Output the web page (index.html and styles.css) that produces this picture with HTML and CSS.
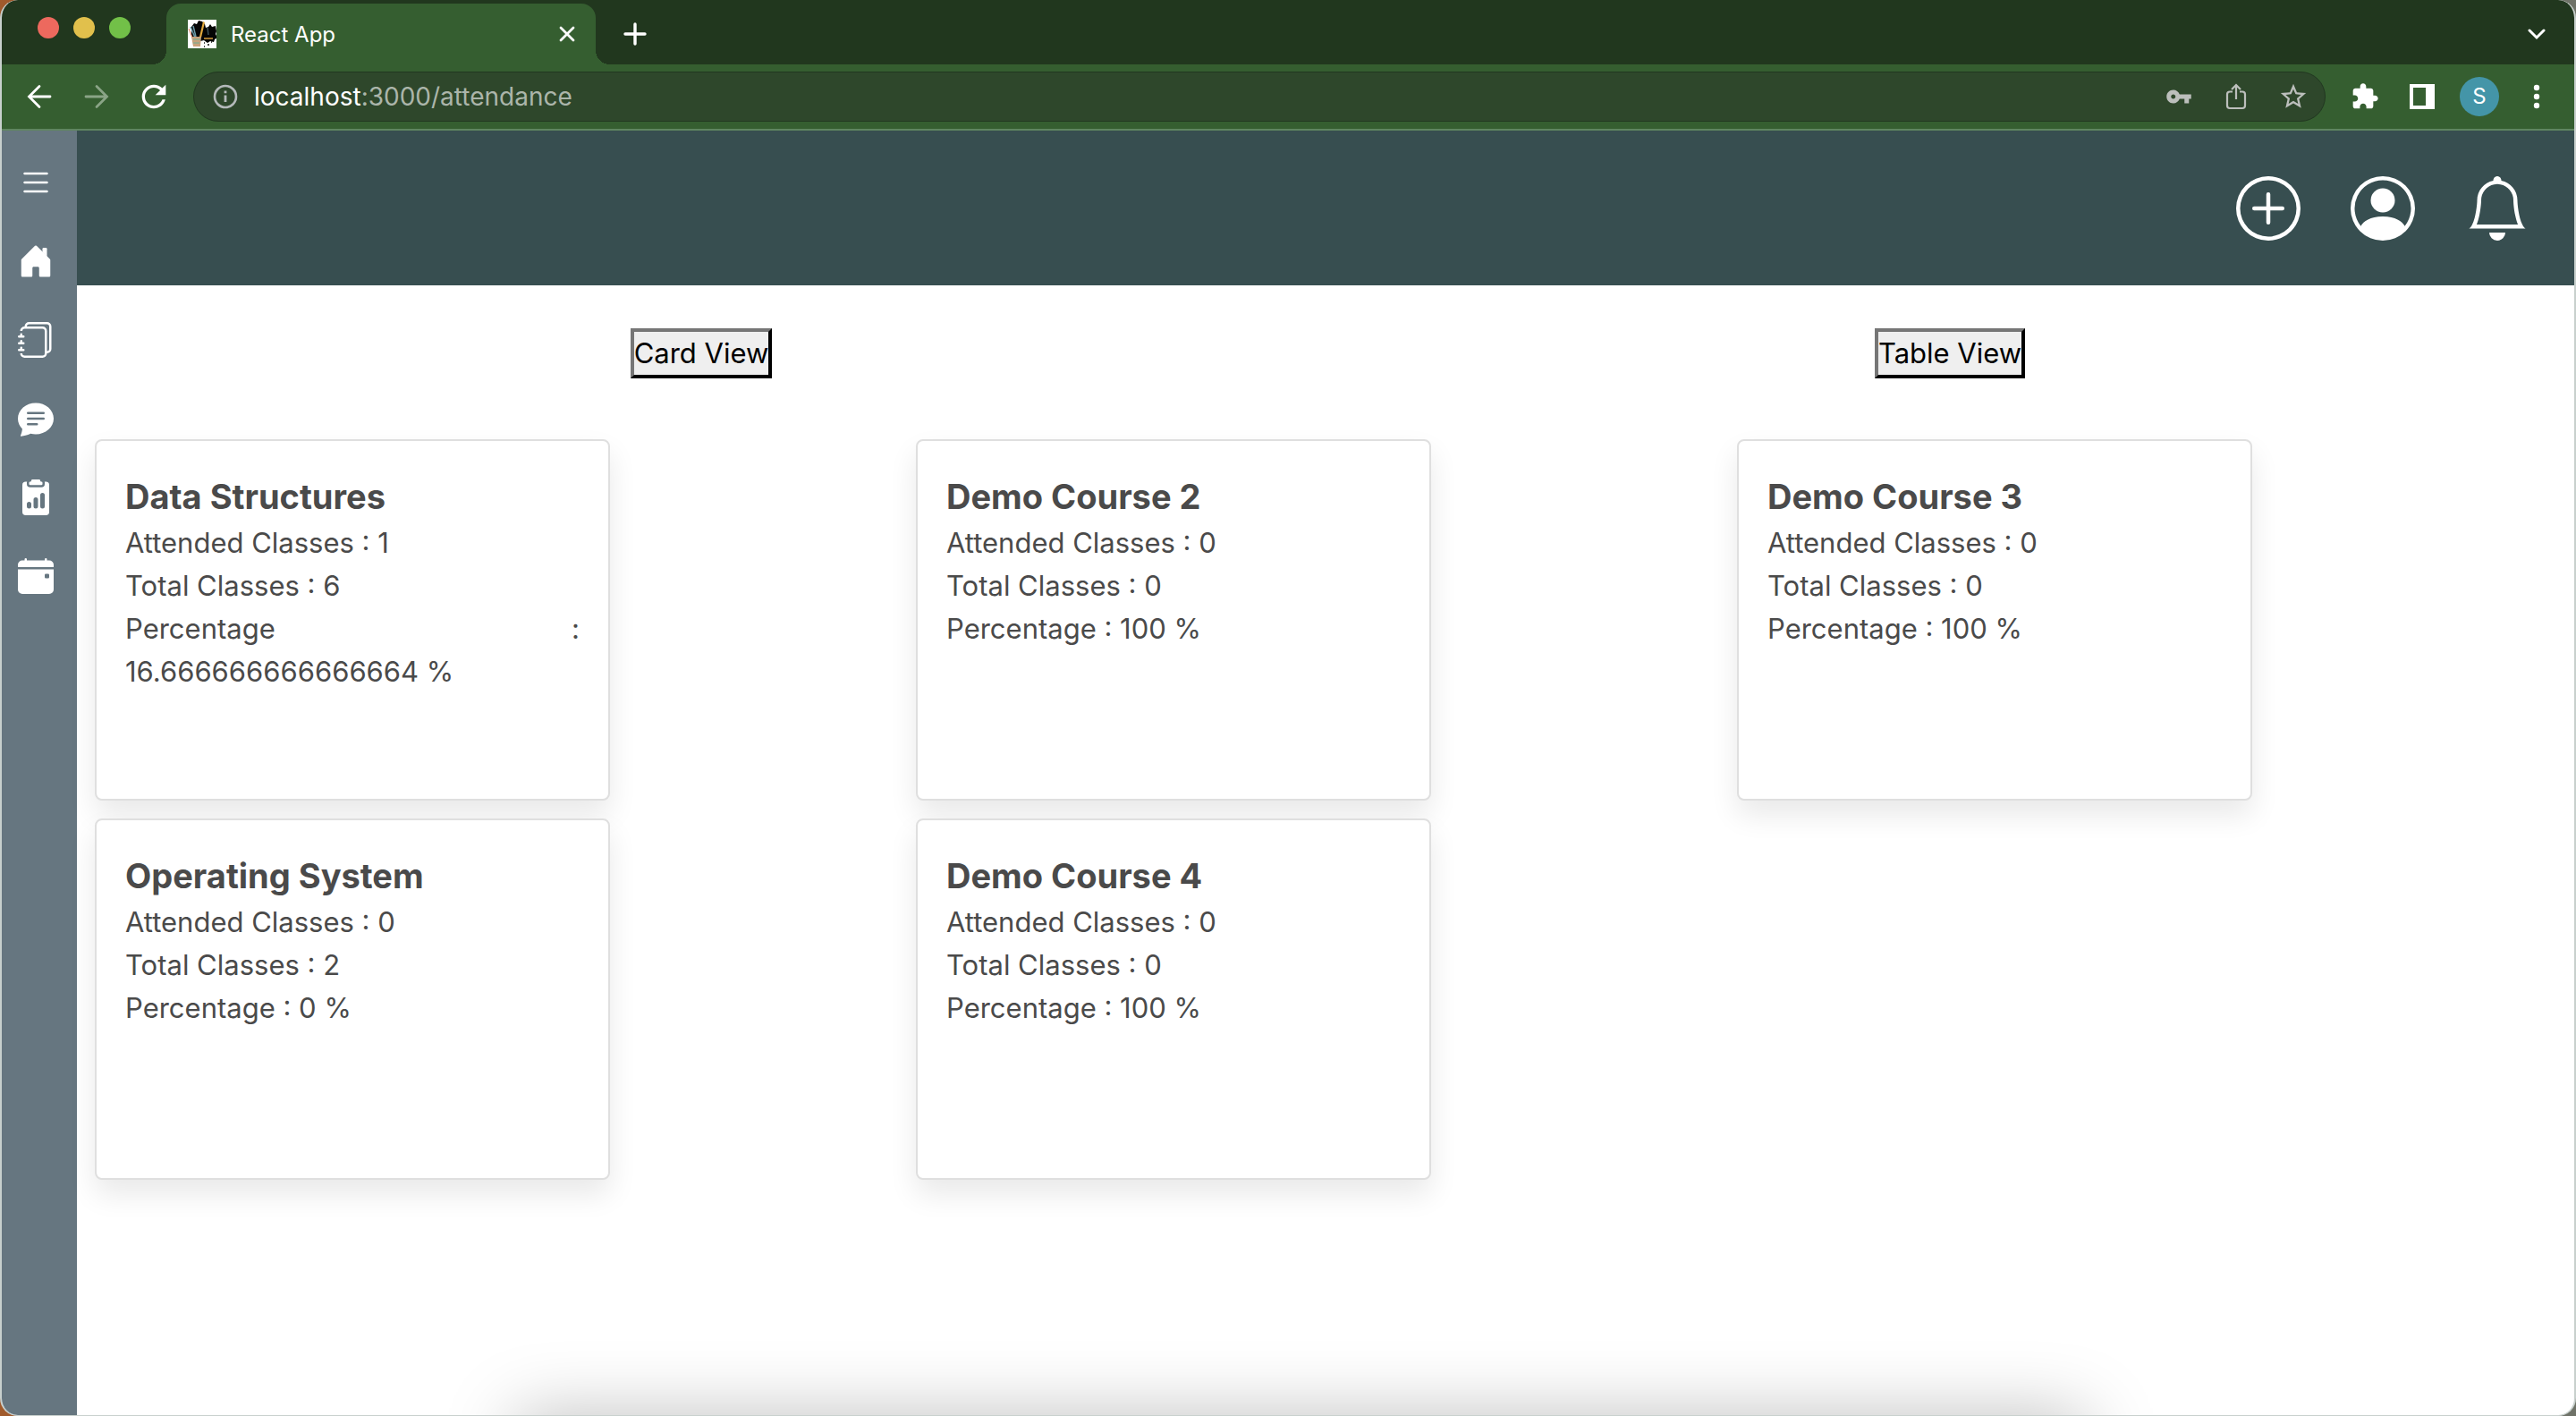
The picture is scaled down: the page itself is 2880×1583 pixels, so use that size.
FILE: index.html
```html
<!DOCTYPE html>
<html lang="en">
<head>
<meta charset="utf-8">
<title>React App</title>
<link rel="stylesheet" href="styles.css">
</head>
<body>
<div class="window">
  <div class="tabstrip">
    <div class="lights">
      <button class="light light-close" aria-label="Close window"></button>
      <button class="light light-min" aria-label="Minimise window"></button>
      <button class="light light-max" aria-label="Zoom window"></button>
    </div>
    <div class="tab">
      <svg class="favicon" viewBox="0 0 32 32" aria-hidden="true">
        <rect width="32" height="32" fill="#fff"/>
        <path d="M4 8l3-4 3 1 2-4 4 1 3 3 1 4 3-1 2-3 2 3 4-1 1 6-1 3 2 4-3 2-1 3-4-1-3 2-4-3-4 1-5-2-4-1-1-5z" fill="#050505"/>
        <path d="M13 19l4-17 2 1-4 17z" fill="#e3a93c"/>
        <path d="M3 8l5 12M6 7l3 12" stroke="#6a9aa8" stroke-width="1.5"/>
        <path d="M1 10l4 10" stroke="#e07a5a" stroke-width="1"/>
        <path d="M4 19h11l-1 11H6z" fill="#c9a27c"/>
        <path d="M6 22h8M6 26h7" stroke="#8cab8c" stroke-width="1.5"/>
        <path d="M18 21h10" stroke="#d69b3a" stroke-width="1.5"/>
        <path d="M22 9l1 8" stroke="#3d5058" stroke-width="1.5"/>
        <path d="M18 26h1M22 28h2M18 30h1M26 25h1" stroke="#111" stroke-width="1.5"/>
      </svg>
      <span class="tab-title">React App</span>
      <button class="tab-close" aria-label="Close tab"><svg width="20" height="20" viewBox="0 0 20 20"><path d="M3 3l14 14M17 3L3 17" stroke="#fff" stroke-width="2.8" stroke-linecap="round"/></svg></button>
    </div>
    <button class="tool" aria-label="New tab"><svg width="26" height="26" viewBox="0 0 26 26"><path d="M13 2v22M2 13h22" stroke="#fff" stroke-width="3.4" stroke-linecap="round"/></svg></button>
    <button class="tool tab-search" aria-label="Search tabs"><svg width="20" height="14" viewBox="0 0 20 14"><path d="M2 3l8 8 8-8" fill="none" stroke="#fff" stroke-width="3" stroke-linecap="round"/></svg></button>
  </div>
  <div class="toolbar">
    <button class="tool" aria-label="Back"><svg width="28" height="28" viewBox="0 0 28 28"><path d="M26 14H3M14 2.500L2.500 14 14 25.500" fill="none" stroke="#fff" stroke-width="2.800" stroke-linecap="round"/></svg></button>
    <button class="tool" aria-label="Forward"><svg width="28" height="28" viewBox="0 0 28 28"><path d="M2 14h23M14 2.500L25.500 14 14 25.500" fill="none" stroke="#8aa486" stroke-width="2.800" stroke-linecap="round"/></svg></button>
    <button class="tool" aria-label="Reload"><svg width="40" height="40" viewBox="0 0 24 24"><path fill="#fff" d="M17.650 6.350C16.200 4.900 14.210 4 12 4c-4.420 0-7.990 3.580-7.990 8s3.570 8 7.990 8c3.730 0 6.840-2.550 7.730-6h-2.080c-.820 2.330-3.040 4-5.650 4-3.310 0-6-2.690-6-6s2.690-6 6-6c1.660 0 3.140.690 4.220 1.780L13 11h7V4l-2.350 2.350z"/></svg></button>
    <div class="omnibox">
      <svg class="info" width="32" height="32" viewBox="0 0 32 32" aria-hidden="true"><circle cx="16" cy="16" r="12" fill="none" stroke="#b4b9ba" stroke-width="2.600"/><path d="M16 14.500v7.500M16 9.500v2.800" stroke="#b4b9ba" stroke-width="2.800"/></svg>
      <div class="url" role="textbox" aria-label="Address" contenteditable="true" spellcheck="false"><span class="host">localhost</span>:3000/attendance</div>
      <button class="tool" aria-label="Passwords"><svg width="30" height="30" viewBox="0 0 24 24"><path fill="#bcbfbc" d="M12.650 10C11.830 7.670 9.610 6 7 6c-3.310 0-6 2.690-6 6s2.690 6 6 6c2.610 0 4.830-1.670 5.650-4H17v4h4v-4h2v-4H12.650zM7 14c-1.100 0-2-.900-2-2s.900-2 2-2 2 .900 2 2-.900 2-2 2z"/></svg></button>
      <button class="tool" aria-label="Share"><svg width="24" height="30" viewBox="0 0 24 30"><path d="M8 9.500H5a3 3 0 0 0-3 3V25a3 3 0 0 0 3 3h14a3 3 0 0 0 3-3V12.500a3 3 0 0 0-3-3h-3M12 18V2.500M7 7l5-5 5 5" fill="none" stroke="#bcbfbc" stroke-width="2.200"/></svg></button>
      <button class="tool" aria-label="Bookmark"><svg width="34" height="34" viewBox="0 0 24 24"><path fill="#bcbfbc" d="M22 9.240l-7.190-.620L12 2 9.190 8.630 2 9.240l5.460 4.730L5.820 21 12 17.270 18.180 21l-1.630-7.030L22 9.240zM12 15.400l-3.760 2.270 1-4.280-3.320-2.880 4.380-.380L12 6.100l1.710 4.040 4.380.380-3.320 2.880 1 4.280L12 15.400z"/></svg></button>
    </div>
    <button class="tool" aria-label="Extensions"><svg width="32" height="32" viewBox="0 0 24 24"><path fill="#fff" d="M20.500 11H19V7c0-1.100-.900-2-2-2h-4V3.500C13 2.120 11.880 1 10.500 1S8 2.120 8 3.500V5H4c-1.100 0-1.990.900-1.990 2v3.800H3.500c1.490 0 2.700 1.210 2.700 2.700s-1.210 2.700-2.700 2.700H2V20c0 1.100.900 2 2 2h3.800v-1.500c0-1.490 1.210-2.700 2.700-2.700 1.490 0 2.700 1.210 2.700 2.700V22H17c1.100 0 2-.900 2-2v-4h1.500c1.380 0 2.500-1.120 2.500-2.500S21.880 11 20.500 11z"/></svg></button>
    <button class="tool" aria-label="Side panel"><svg width="28" height="28" viewBox="0 0 28 28"><path fill="#fff" fill-rule="evenodd" d="M0 0h28v28H0zM4 4v20h14V4z"/></svg></button>
    <button class="tool" aria-label="Profile"><span class="avatar">S</span></button>
    <button class="tool" aria-label="Menu"><svg width="8" height="28" viewBox="0 0 8 28"><g fill="#fff"><circle cx="4" cy="4" r="3.200"/><circle cx="4" cy="14" r="3.200"/><circle cx="4" cy="24" r="3.200"/></g></svg></button>
  </div>
  <div class="app">
    <nav class="sidebar">
      <button class="side-link" aria-label="Toggle menu"><svg viewBox="0 0 16 16"><path d="M2.500 12a.5.5 0 0 1 .5-.5h10a.5.5 0 0 1 0 1H3a.5.5 0 0 1-.5-.5zm0-4a.5.5 0 0 1 .5-.5h10a.5.5 0 0 1 0 1H3a.5.5 0 0 1-.5-.5zm0-4a.5.5 0 0 1 .5-.5h10a.5.5 0 0 1 0 1H3a.5.5 0 0 1-.5-.5z"/></svg></button>
      <a class="side-link" href="#home" aria-label="Home"><svg viewBox="0 0 16 16"><path d="M6.500 10.995V14.500a.5.5 0 0 1-.5.5H2a.5.5 0 0 1-.5-.5v-7a.5.5 0 0 1 .146-.354l6-6a.5.5 0 0 1 .708 0l6 6a.5.5 0 0 1 .146.354v7a.5.5 0 0 1-.5.5h-4a.5.5 0 0 1-.5-.5V11c0-.25-.25-.5-.5-.5H7c-.25 0-.5.25-.5.495z"/><path d="M13 2.500V6l-2-2V2.500a.5.5 0 0 1 .5-.5h1a.5.5 0 0 1 .5.5z"/></svg></a>
      <a class="side-link" href="#courses" aria-label="Courses"><svg viewBox="0 0 16 16"><path d="M5 0h8a2 2 0 0 1 2 2v10a2 2 0 0 1-2 2 2 2 0 0 1-2 2H3a2 2 0 0 1-2-2h1a1 1 0 0 0 1 1h8a1 1 0 0 0 1-1V4a1 1 0 0 0-1-1H3a1 1 0 0 0-1 1H1a2 2 0 0 1 2-2h8a2 2 0 0 1 2 2v9a1 1 0 0 0 1-1V2a1 1 0 0 0-1-1H5a1 1 0 0 0-1 1H3a2 2 0 0 1 2-2z"/><path d="M1 6v-.5a.5.5 0 0 1 1 0V6h.5a.5.5 0 0 1 0 1h-2a.5.5 0 0 1 0-1H1zm0 3v-.5a.5.5 0 0 1 1 0V9h.5a.5.5 0 0 1 0 1h-2a.5.5 0 0 1 0-1H1zm0 2.500v.5H.5a.5.5 0 0 0 0 1h2a.5.5 0 0 0 0-1H2v-.5a.5.5 0 0 0-1 0z"/></svg></a>
      <a class="side-link" href="#messages" aria-label="Messages"><svg viewBox="0 0 16 16"><path d="M16 8c0 3.866-3.582 7-8 7a9.060 9.060 0 0 1-2.347-.306c-.584.296-1.925.864-4.181 1.234-.2.032-.352-.176-.273-.362.354-.836.674-1.950.770-2.966C.744 11.370 0 9.760 0 8c0-3.866 3.582-7 8-7s8 3.134 8 7zM4.500 5a.5.5 0 0 0 0 1h7a.5.5 0 0 0 0-1h-7zm0 2.500a.5.5 0 0 0 0 1h7a.5.5 0 0 0 0-1h-7zm0 2.500a.5.5 0 0 0 0 1h4a.5.5 0 0 0 0-1h-4z"/></svg></a>
      <a class="side-link" href="#attendance" aria-label="Attendance"><svg viewBox="0 0 16 16"><path d="M10 .5a.5.5 0 0 0-.5-.5h-3a.5.5 0 0 0-.5.5.5.5 0 0 1-.5.5.5.5 0 0 0-.5.5V2a.5.5 0 0 0 .5.5h5A.5.5 0 0 0 11 2v-.5a.5.5 0 0 0-.5-.5.5.5 0 0 1-.5-.5Z"/><path d="M4.085 1H3.500A1.500 1.500 0 0 0 2 2.500v12A1.500 1.500 0 0 0 3.500 16h9a1.500 1.500 0 0 0 1.500-1.500v-12A1.500 1.500 0 0 0 12.500 1h-.585c.055.156.085.325.085.5V2a1.500 1.500 0 0 1-1.500 1.500h-5A1.500 1.500 0 0 1 4 2v-.5c0-.175.030-.344.085-.5ZM10 7a1 1 0 1 1 2 0v5a1 1 0 1 1-2 0V7Zm-6 4a1 1 0 1 1 2 0v1a1 1 0 1 1-2 0v-1Zm4-3a1 1 0 0 1 1 1v3a1 1 0 1 1-2 0V9a1 1 0 0 1 1-1Z"/></svg></a>
      <a class="side-link" href="#calendar" aria-label="Calendar"><svg viewBox="0 0 16 16"><path d="M4 .5a.5.5 0 0 0-1 0V1H2a2 2 0 0 0-2 2v1h16V3a2 2 0 0 0-2-2h-1V.5a.5.5 0 0 0-1 0V1H4V.5zM16 14V5H0v9a2 2 0 0 0 2 2h12a2 2 0 0 0 2-2zm-3.500-7h1a.5.5 0 0 1 .5.5v1a.5.5 0 0 1-.5.5h-1a.5.5 0 0 1-.5-.5v-1a.5.5 0 0 1 .5-.5z"/></svg></a>
    </nav>
    <div class="content">
      <header class="header">
        <button class="head-button" aria-label="Add"><svg viewBox="0 0 16 16"><path d="M8 15A7 7 0 1 1 8 1a7 7 0 0 1 0 14zm0 1A8 8 0 1 0 8 0a8 8 0 0 0 0 16z"/><path d="M8 4a.5.5 0 0 1 .5.5v3h3a.5.5 0 0 1 0 1h-3v3a.5.5 0 0 1-1 0v-3h-3a.5.5 0 0 1 0-1h3v-3A.5.5 0 0 1 8 4z"/></svg></button>
        <button class="head-button" aria-label="Account"><svg viewBox="0 0 16 16"><path d="M11 6a3 3 0 1 1-6 0 3 3 0 0 1 6 0z"/><path fill-rule="evenodd" d="M0 8a8 8 0 1 1 16 0A8 8 0 0 1 0 8zm8-7a7 7 0 0 0-5.468 11.370C3.242 11.226 4.805 10 8 10s4.757 1.225 5.468 2.370A7 7 0 0 0 8 1z"/></svg></button>
        <button class="head-button" aria-label="Notifications"><svg viewBox="0 0 16 16"><path d="M8 16a2 2 0 0 0 2-2H6a2 2 0 0 0 2 2zM8 1.918l-.797.161A4.002 4.002 0 0 0 4 6c0 .628-.134 2.197-.459 3.742-.160.767-.376 1.566-.663 2.258h10.244c-.287-.692-.502-1.490-.663-2.258C12.134 8.197 12 6.628 12 6a4.002 4.002 0 0 0-3.203-3.920L8 1.917zM14.220 12c.223.447.481.801.780 1H1c.299-.199.557-.553.780-1C2.680 10.200 3 6.880 3 6c0-2.420 1.720-4.440 4.005-4.901a1 1 0 1 1 1.990 0A5.002 5.002 0 0 1 13 6c0 .880.320 4.200 1.220 6z"/></svg></button>
      </header>
      <main>
        <div class="views">
          <button class="view">Card View</button>
          <button class="view">Table View</button>
        </div>
        <div class="cards">
          <article class="card"><h2>Data Structures</h2><p>Attended Classes : 1</p><p>Total Classes : 6</p><p>Percentage : 16.666666666666664&nbsp;%</p></article>
          <article class="card"><h2>Demo Course 2</h2><p>Attended Classes : 0</p><p>Total Classes : 0</p><p>Percentage : 100 %</p></article>
          <article class="card"><h2>Demo Course 3</h2><p>Attended Classes : 0</p><p>Total Classes : 0</p><p>Percentage : 100 %</p></article>
          <article class="card"><h2>Operating System</h2><p>Attended Classes : 0</p><p>Total Classes : 2</p><p>Percentage : 0 %</p></article>
          <article class="card"><h2>Demo Course 4</h2><p>Attended Classes : 0</p><p>Total Classes : 0</p><p>Percentage : 100 %</p></article>
        </div>
      </main>
    </div>
  </div>
  <div class="dock-shadow"></div>
</div>
</body>
</html>
```
FILE: styles.css
```css
* { box-sizing: border-box; }

body {
  margin: 0;
  background: linear-gradient(90deg, #a05a2c 50%, #6f7268 50%);
  font-family: Inter, "Liberation Sans", sans-serif;
}

button {
  font: inherit;
  border: 0;
  padding: 0;
  background: none;
}

svg { display: block; }

.window {
  position: relative;
  display: flex;
  flex-direction: column;
  min-height: 100vh;
  overflow: hidden;
  background: #fff;
  border: 2px solid #c8d0cd;
  border-top: 0;
  border-bottom-width: 1px;
  border-radius: 20px;
}

/* Browser chrome */

.tabstrip {
  display: flex;
  height: 72px;
  padding: 4px 10px 0 40px;
  background: #21371e;
}

.lights {
  display: flex;
  gap: 16px;
  width: 144px;
  padding-top: 15px;
}

.light {
  width: 24px;
  height: 24px;
  border-radius: 50%;
}

.light-close { background: #ed695e; }
.light-min { background: #e1c04c; }
.light-max { background: #72c048; }

.tab {
  position: relative;
  display: flex;
  align-items: center;
  width: 480px;
  height: 68px;
  padding: 0 12px 0 24px;
  margin-right: 12px;
  background: #355e30;
  border-radius: 16px 16px 0 0;
}

/* Flared feet of the active tab */
.tab::before,
.tab::after {
  content: "";
  position: absolute;
  bottom: 0;
  width: 16px;
  height: 16px;
}

.tab::before {
  right: 100%;
  background: radial-gradient(circle at 0 0, #21371e 16px, #355e30 16px);
}

.tab::after {
  left: 100%;
  background: radial-gradient(circle at 100% 0, #21371e 16px, #355e30 16px);
}

.favicon {
  width: 32px;
  height: 32px;
}

.tab-title {
  flex: 1;
  margin-left: 16px;
  color: #fff;
  font-size: 24px;
}

.tab-close,
.tool {
  display: flex;
  flex: none;
  align-items: center;
  justify-content: center;
}

.tab-close {
  width: 40px;
  height: 40px;
}

.tool {
  width: 64px;
  height: 56px;
}

.tabstrip .tool { height: 68px; }

.tab-search { margin-left: auto; }

.toolbar {
  display: flex;
  align-items: center;
  height: 74px;
  padding: 0 10px;
  background: #355e30;
  border-bottom: 2px solid #5f8560;
}

.omnibox {
  display: flex;
  flex: 1;
  align-items: center;
  height: 56px;
  margin: 0 12px;
  padding: 0 3px 0 19px;
  background: #2e472b;
  border: 1px solid #213720;
  border-radius: 28px;
}

.url {
  flex: 1;
  margin-left: 16px;
  color: #abb5aa;
  font-size: 28px;
  line-height: 36px;
}

.host { color: #fff; }

.avatar {
  width: 44px;
  height: 44px;
  border-radius: 50%;
  background: #4495a8;
  color: #fff;
  font-size: 24px;
  line-height: 44px;
}

/* Application */

.app {
  display: flex;
  flex: 1;
}

.sidebar {
  display: flex;
  flex: none;
  flex-direction: column;
  gap: 48px;
  width: 84px;
  padding: 38px 0 0 18px;
  background: #667680;
}

.side-link {
  width: 40px;
  height: 40px;
}

.side-link svg,
.head-button svg {
  width: 100%;
  height: 100%;
  fill: #fff;
}

.content {
  flex: 1;
  min-width: 0;
}

.header {
  display: flex;
  align-items: center;
  justify-content: flex-end;
  gap: 56px;
  height: 173px;
  padding-right: 50px;
  background: #374e50;
}

.head-button {
  width: 72px;
  height: 72px;
}

.views {
  display: grid;
  grid-template-columns: repeat(2, 1fr);
  justify-items: center;
  padding: 48px 0;
}

.view {
  height: 56px;
  border: 4px outset #000;
  border-color: #767676 #212121 #212121 #767676;
  background: #efefef;
  color: #000;
  font-size: 31px;
  line-height: 48px;
}

.cards {
  display: grid;
  grid-template-columns: repeat(3, 1fr);
  gap: 20px 0;
  padding: 20px 18px 20px 20px;
}

.card {
  width: 576px;
  min-height: 404px;
  padding: 34px 32px 32px;
  background: #fff;
  border: 2px solid #dfdfdf;
  border-radius: 8px;
  box-shadow: 0 16px 32px rgba(0, 0, 0, 0.09);
  color: #4a4a4a;
  text-align: justify;
}

.card h2 {
  margin: 0;
  font-size: 38px;
  line-height: 56px;
}

.card p {
  margin: 0;
  font-size: 31px;
  line-height: 48px;
}

/* Shade thrown upward by the dock below the window */
.dock-shadow {
  position: absolute;
  top: 100%;
  left: 20%;
  right: 19%;
  height: 80px;
  box-shadow: 0 0 80px rgba(0, 0, 0, 0.26);
}
```
